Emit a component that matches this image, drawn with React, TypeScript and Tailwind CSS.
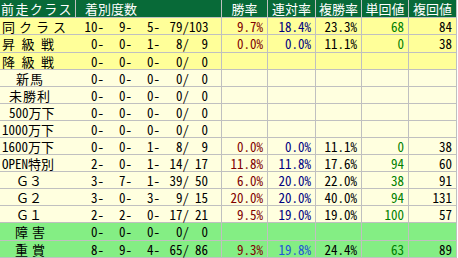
interface RaceRow {
  label: string;
  labelClass: string;
  bg: string;
  h: string;
  counts: [string, string, string, string, string];
  stats?: [string, string, string, string, string];
  placeColor?: string;
}

const YELLOW = 'bg-[#ffff99]';
const CREAM = 'bg-[#ffffdf]';
const GREEN = 'bg-[#84ee84]';

const rows: RaceRow[] = [
  { label: '同クラス', labelClass: 'pl-[2px] tracking-[4px]', bg: YELLOW, h: 'h-[17px]', counts: ['10-', '9-', '5-', '79/', '103'], stats: ['9.7%', '18.4%', '23.3%', '68', '84'] },
  { label: '昇級戦', labelClass: 'pl-[2px] tracking-[6.5px]', bg: YELLOW, h: 'h-[18px]', counts: ['0-', '0-', '1-', '8/', '9'], stats: ['0.0%', '0.0%', '11.1%', '0', '38'] },
  { label: '降級戦', labelClass: 'pl-[2px] tracking-[6.5px]', bg: YELLOW, h: 'h-[17px]', counts: ['0-', '0-', '0-', '0/', '0'] },
  { label: '新馬', labelClass: 'pl-[16px] tracking-[1px]', bg: CREAM, h: 'h-[17px]', counts: ['0-', '0-', '0-', '0/', '0'] },
  { label: '未勝利', labelClass: 'pl-[9px] tracking-[1px]', bg: CREAM, h: 'h-[17px]', counts: ['0-', '0-', '0-', '0/', '0'] },
  { label: '500万下', labelClass: 'pl-[9px]', bg: CREAM, h: 'h-[17px]', counts: ['0-', '0-', '0-', '0/', '0'] },
  { label: '1000万下', labelClass: 'pl-[2px]', bg: CREAM, h: 'h-[17px]', counts: ['0-', '0-', '0-', '0/', '0'] },
  { label: '1600万下', labelClass: 'pl-[2px]', bg: CREAM, h: 'h-[17px]', counts: ['0-', '0-', '1-', '8/', '9'], stats: ['0.0%', '0.0%', '11.1%', '0', '38'] },
  { label: 'OPEN特別', labelClass: 'pl-[2px]', bg: CREAM, h: 'h-[17px]', counts: ['2-', '0-', '1-', '14/', '17'], stats: ['11.8%', '11.8%', '17.6%', '94', '60'] },
  { label: 'Ｇ３', labelClass: 'pl-[16px]', bg: CREAM, h: 'h-[17px]', counts: ['3-', '7-', '1-', '39/', '50'], stats: ['6.0%', '20.0%', '22.0%', '38', '91'] },
  { label: 'Ｇ２', labelClass: 'pl-[16px]', bg: CREAM, h: 'h-[17px]', counts: ['3-', '0-', '3-', '9/', '15'], stats: ['20.0%', '20.0%', '40.0%', '94', '131'] },
  { label: 'Ｇ１', labelClass: 'pl-[16px]', bg: CREAM, h: 'h-[17px]', counts: ['2-', '2-', '0-', '17/', '21'], stats: ['9.5%', '19.0%', '19.0%', '100', '57'] },
  { label: '障害', labelClass: 'pl-[15px] tracking-[4px]', bg: GREEN, h: 'h-[18px]', counts: ['0-', '0-', '0-', '0/', '0'] },
  { label: '重賞', labelClass: 'pl-[15px] tracking-[4px]', bg: GREEN, h: 'h-[17px]', counts: ['8-', '9-', '4-', '65/', '86'], stats: ['9.3%', '19.8%', '24.4%', '63', '89'], placeColor: 'text-[#1f55d8]' },
];

const statCols = [
  { title: '勝率', w: 'w-[46px]', color: 'text-[#800000]' },
  { title: '連対率', w: 'w-[48px]', color: 'text-[#000080]' },
  { title: '複勝率', w: 'w-[46px]', color: 'text-black' },
  { title: '単回値', w: 'w-[47px]', color: 'text-[#008000]' },
  { title: '複回値', w: 'w-[48px]', color: 'text-black' },
];

export default function App() {
  return (
    <div className="w-[458px] h-[258px] bg-white overflow-hidden font-['Noto_Sans_Mono_CJK_JP','Noto_Sans_CJK_JP','Liberation_Mono',monospace] text-[13px] leading-none">
      <div className="w-[457px] flex flex-col">
        {/* header */}
        <div className="flex h-[18px] bg-[#086a38] text-white border-b border-[#c0c0c0]">
          <div className="w-[76px] flex items-center pl-[1px] tracking-[1.4px] border-r border-[#c0c0c0]">前走クラス</div>
          <div className="w-[146px] flex items-center pl-[9px] border-r border-[#c0c0c0]">着別度数</div>
          {statCols.map((c) => (
            <div key={c.title} className={`${c.w} flex items-center justify-center border-r border-[#c0c0c0]`}>
              {c.title}
            </div>
          ))}
        </div>

        {rows.map((r) => (
          <div key={r.label} className={`flex ${r.h} ${r.bg} border-b border-[#c0c0c0] text-black`}>
            <div className={`w-[76px] flex items-center whitespace-nowrap ${r.labelClass}`}>{r.label}</div>
            <div className="w-[146px] flex items-center border-r border-[#c0c0c0]">
              <span className="w-[28px] text-right">{r.counts[0]}</span>
              <span className="w-[28px] text-right">{r.counts[1]}</span>
              <span className="w-[28px] text-right">{r.counts[2]}</span>
              <span className="w-[29px] text-right">{r.counts[3]}</span>
              <span className="w-[19px] text-right">{r.counts[4]}</span>
            </div>
            {statCols.map((c, i) => (
              <div
                key={c.title}
                className={`${c.w} flex items-center justify-end pr-[4px] border-r border-[#c0c0c0] ${
                  i === 1 && r.placeColor ? r.placeColor : c.color
                }`}
              >
                {r.stats ? r.stats[i] : ''}
              </div>
            ))}
          </div>
        ))}
      </div>
    </div>
  );
}
